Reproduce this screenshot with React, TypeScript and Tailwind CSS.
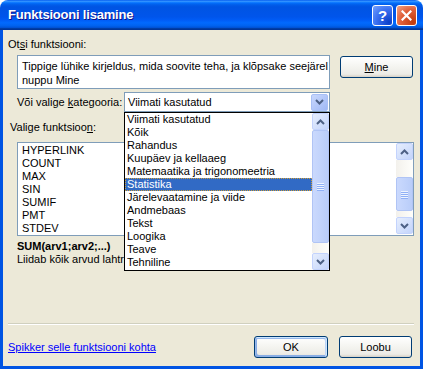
import React from "react";

function Chevron({ dir }: { dir: "up" | "down" }) {
  return (
    <svg width="9" height="6" viewBox="0 0 9 6">
      <path
        d={dir === "up" ? "M1 5 L4.5 1.5 L8 5" : "M1 1 L4.5 4.5 L8 1"}
        fill="none"
        stroke="#4d6185"
        strokeWidth="2"
      />
    </svg>
  );
}

function ScrollBtn({ dir, hot }: { dir: "up" | "down"; hot?: boolean }) {
  return (
    <div
      className={
        "w-[17px] h-[17px] shrink-0 rounded-[2px] border flex items-center justify-center " +
        (hot
          ? "border-[#a9c0f6] bg-[linear-gradient(135deg,#c9d8fd,#9fb8f5)]"
          : "border-[#c3d3fd] bg-[linear-gradient(135deg,#e6eefd,#c3d4fb)]")
      }
    >
      <Chevron dir={dir} />
    </div>
  );
}

function Thumb({ h }: { h: number }) {
  return (
    <div
      className="shrink-0 rounded-[2px] border border-[#b0c4f5] bg-[linear-gradient(to_right,#cad9fd,#b9cdf9)] flex flex-col items-center justify-center gap-[1px]"
      style={{ height: h }}
    >
      {[0, 1, 2, 3].map((i) => (
        <div key={i} className="w-[7px] h-[1px] bg-[#eef4fe] shadow-[0_1px_0_#8fb0f6]" />
      ))}
    </div>
  );
}

function Track({ h }: { h: number }) {
  return <div className="shrink-0 bg-[linear-gradient(to_right,#f3f1ec,#fefefb)]" style={{ height: h }} />;
}

function ScrollBar({ a, thumb, b }: { a: number; thumb: number; b: number }) {
  return (
    <div className="w-[17px] flex flex-col bg-[#fefefb]">
      <ScrollBtn dir="up" />
      <Track h={a} />
      <Thumb h={thumb} />
      <Track h={b} />
      <ScrollBtn dir="down" />
    </div>
  );
}

const xpBtn =
  "h-[22px] rounded-[3px] border border-[#003c74] bg-[linear-gradient(180deg,#ffffff,#f4f4f0_50%,#ecebe6_86%,#d6d0c5)] flex items-center justify-center text-[11px] text-black";

const categories = [
  "Viimati kasutatud",
  "Kõik",
  "Rahandus",
  "Kuupäev ja kellaaeg",
  "Matemaatika ja trigonomeetria",
  "Statistika",
  "Järelevaatamine ja viide",
  "Andmebaas",
  "Tekst",
  "Loogika",
  "Teave",
  "Tehniline",
];

const functions = ["HYPERLINK", "COUNT", "MAX", "SIN", "SUMIF", "PMT", "STDEV"];

export default function App() {
  return (
    <div className="w-[423px] h-[369px] flex flex-col bg-white font-[family-name:Liberation_Sans,Arial,sans-serif] text-[11px] leading-[13px] text-black select-none">
      {/* Title bar */}
      <div className="h-[30px] shrink-0 rounded-t-[8px] flex items-center pl-[8px] pr-[6px] bg-[linear-gradient(to_bottom,#0058ee_0%,#3593ff_4%,#288eff_6%,#127dff_8%,#036ffc_10%,#0262ee_14%,#0057e5_20%,#0054e3_24%,#0055eb_56%,#005bf5_66%,#026afe_76%,#0062ef_86%,#0052d6_92%,#0040ab_94%,#003092_100%)]">
        <div className="text-white font-bold text-[13px] leading-[16px] tracking-[-0.2px] [text-shadow:1px_1px_#0f1089]">
          Funktsiooni lisamine
        </div>
        <div className="ml-auto flex gap-[3px]">
          <div className="w-[21px] h-[21px] rounded-[3px] border border-white bg-[radial-gradient(circle_at_85%_85%,#0a3fc8,#3a6ff0_55%,#74a2ff)] flex items-center justify-center text-white font-bold text-[15px] leading-[15px]">
            ?
          </div>
          <div className="w-[21px] h-[21px] rounded-[3px] border border-white bg-[radial-gradient(circle_at_85%_85%,#c23a0c,#e0603a_55%,#f2a487)] flex items-center justify-center">
            <svg width="11" height="11" viewBox="0 0 11 11">
              <path d="M1.5 1.5 L9.5 9.5 M9.5 1.5 L1.5 9.5" stroke="white" strokeWidth="2.2" strokeLinecap="square" />
            </svg>
          </div>
        </div>
      </div>

      {/* Body */}
      <div className="flex-1 flex flex-col border-x-[3px] border-b-[3px] border-[#0054e3] bg-[#ece9d8] relative">
        <div className="mt-[8px] ml-[5px]">
          Ot<span className="underline">s</span>i funktsiooni:
        </div>

        <div className="mt-[4px] ml-[14px] flex items-start">
          <div className="w-[313px] h-[34px] border border-[#7f9db9] bg-white pl-[4px] pt-[3px] leading-[14px]">
            Tippige lühike kirjeldus, mida soovite teha, ja klõpsake seejärel
            <br />
            nuppu Mine
          </div>
          <div className={xpBtn + " ml-[10px] mt-[1px] w-[73px]"}>
            <span>
              <span className="underline">M</span>ine
            </span>
          </div>
        </div>

        <div className="mt-[3px] ml-[14px] flex items-center">
          <div className="w-[107px]">
            Või valige <span className="underline">k</span>ategooria:
          </div>
          <div className="w-[206px] h-[20px] border border-[#7f9db9] bg-white flex items-center pl-[3px] pr-[1px]">
            <span>Viimati kasutatud</span>
            <div className="ml-auto">
              <ScrollBtn dir="down" hot />
            </div>
          </div>
        </div>

        <div className="mt-[9px] ml-[7px]">
          Valige funktsioo<span className="underline">n</span>:
        </div>

        <div className="mt-[8px] ml-[14px] w-[397px] h-[94px] border border-[#7f9db9] bg-white flex">
          <div className="flex-1 pl-[4px] pt-[1px]">
            {functions.map((f) => (
              <div key={f} className="h-[13px]">
                {f}
              </div>
            ))}
          </div>
          <ScrollBar a={17} thumb={34} b={6} />
        </div>

        <div className="mt-[4px] ml-[14px] w-[107px] font-bold whitespace-nowrap overflow-hidden">SUM(arv1;arv2;...)</div>
        <div className="ml-[14px] w-[107px] whitespace-nowrap overflow-hidden">Liidab kõik arvud lahtrivahemikus.</div>

        <div className="mt-[57px] ml-[5px] w-[406px] h-[1px] bg-[#d0d0bf] shadow-[0_1px_0_#ffffff]" />

        <div className="mt-[12px] ml-[5px] mr-[8px] flex items-center">
          <span className="text-[#0000ff] underline">Spikker selle funktsiooni kohta</span>
          <div
            className={
              xpBtn +
              " ml-auto w-[74px] shadow-[inset_-1px_1px_#cee7ff,inset_1px_2px_#98b8ea,inset_-2px_2px_#bcd4f6,inset_1px_-1px_#89ade4,inset_2px_-2px_#89ade4]"
            }
          >
            OK
          </div>
          <div className={xpBtn + " ml-[11px] w-[73px]"}>Loobu</div>
        </div>

        {/* Dropdown list overlay */}
        <div className="absolute left-[121px] top-[82px] w-[206px] h-[159px] border border-black bg-white flex">
          <div className="flex-1">
            {categories.map((c) => (
              <div
                key={c}
                className={
                  "h-[13px] pl-[2px] whitespace-nowrap " +
                  (c === "Statistika"
                    ? "bg-[#316ac5] text-white outline outline-1 outline-dotted outline-[#ce9e3a] -outline-offset-1"
                    : "")
                }
              >
                {c}
              </div>
            ))}
          </div>
          <ScrollBar a={0} thumb={113} b={10} />
        </div>
      </div>
    </div>
  );
}
